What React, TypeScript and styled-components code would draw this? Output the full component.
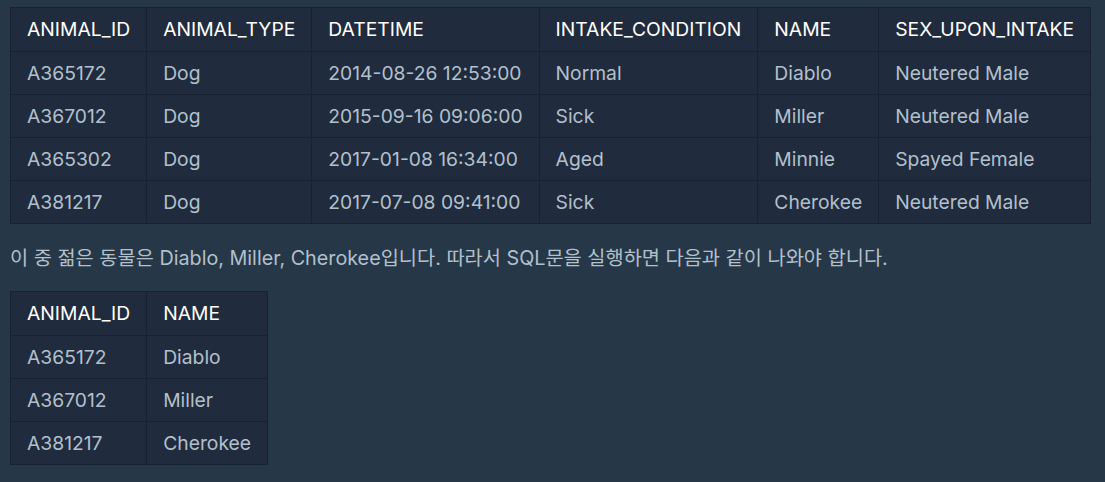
import React from "react";
import styled, { createGlobalStyle } from "styled-components";

const GlobalStyle = createGlobalStyle`
  html, body {
    margin: 0;
    padding: 0;
    background: #263747;
  }
  body {
    font-family: Inter, "Noto Sans CJK KR", sans-serif;
  }
`;

const Page = styled.div`
  padding: 7px 10px;
  background: #263747;
  min-height: 100vh;
  box-sizing: border-box;
`;

const Table = styled.table`
  border-collapse: collapse;
  background: #202b3d;
  border: 1px solid #172130;
  font-size: 19.3px;
`;

const Th = styled.th`
  text-align: left;
  font-weight: 400;
  color: #ffffff;
  padding: 8px 16px;
  line-height: 27px;
  border: 1px solid #172130;
  white-space: nowrap;
`;

const Td = styled.td`
  color: #b2c0cc;
  padding: 8px 16px;
  line-height: 26px;
  border: 1px solid #172130;
  white-space: nowrap;
`;

const Text = styled.p`
  margin: 19px 0 18px;
  color: #b2c0cc;
  font-size: 19.75px;
  line-height: 30px;
  white-space: nowrap;
`;

type Row = string[];

const DataTable = ({ head, rows }: { head: string[]; rows: Row[] }) => (
  <Table>
    <thead>
      <tr>
        {head.map((h) => (
          <Th key={h}>{h}</Th>
        ))}
      </tr>
    </thead>
    <tbody>
      {rows.map((r, i) => (
        <tr key={i}>
          {r.map((c, j) => (
            <Td key={j}>{c}</Td>
          ))}
        </tr>
      ))}
    </tbody>
  </Table>
);

const intake: Row[] = [
  ["A365172", "Dog", "2014-08-26 12:53:00", "Normal", "Diablo", "Neutered Male"],
  ["A367012", "Dog", "2015-09-16 09:06:00", "Sick", "Miller", "Neutered Male"],
  ["A365302", "Dog", "2017-01-08 16:34:00", "Aged", "Minnie", "Spayed Female"],
  ["A381217", "Dog", "2017-07-08 09:41:00", "Sick", "Cherokee", "Neutered Male"],
];

const result: Row[] = [
  ["A365172", "Diablo"],
  ["A367012", "Miller"],
  ["A381217", "Cherokee"],
];

export default function App() {
  return (
    <Page>
      <GlobalStyle />
      <DataTable
        head={["ANIMAL_ID", "ANIMAL_TYPE", "DATETIME", "INTAKE_CONDITION", "NAME", "SEX_UPON_INTAKE"]}
        rows={intake}
      />
      <Text>
        이 중 젊은 동물은 Diablo, Miller, Cherokee입니다. 따라서 SQL문을 실행하면 다음과 같이 나와야 합니다.
      </Text>
      <DataTable head={["ANIMAL_ID", "NAME"]} rows={result} />
    </Page>
  );
}
